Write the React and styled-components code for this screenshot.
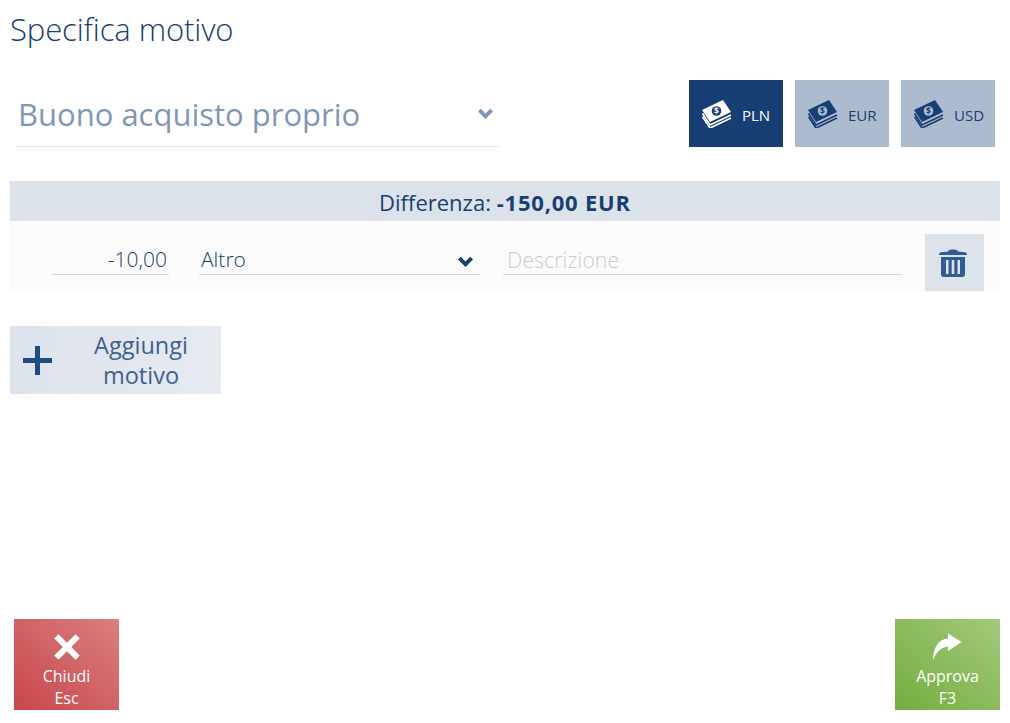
import styled, { createGlobalStyle } from "styled-components"

const Global = createGlobalStyle`
    html, body{
        margin: 0;
        padding: 0;
        background: #fff;
    }
    *{
        box-sizing: border-box;
    }
    body{
        font-family: "Open Sans", "Noto Sans", "Liberation Sans", sans-serif;
        color: #173f73;
    }
`

function MoneyIcon(){
    return (
        <svg width="30" height="29" viewBox="0 0 30 29">
            <polygon className="bill" points="0,11 21,1 29,13 8,23" />
            <polyline className="edge" points="0.500,14.500 8,26 29,16" />
            <polyline className="edge" points="0.500,17.800 8,29 29,19" />
            <circle className="coin" cx="14.500" cy="12" r="4.800" />
            <text className="sign" x="14.500" y="15" textAnchor="middle" fontSize="8.500" fontWeight="700">$</text>
        </svg>
    )
}

function TrashIcon(){
    return (
        <svg width="28" height="28" viewBox="0 0 28 28" fill="#2f5d93">
            <path d="M10 1c1.500-.8 6.500-.8 8 0l1 1.600 7 .7c1.200.2 2 1 2 2.700H0c0-1.700.8-2.500 2-2.700l7-.7z" />
            <path fillRule="evenodd" d="M2 8h24v17.500C26 27 25 28 23.500 28h-19C3 28 2 27 2 25.500zM7 11v14h2.500V11zm5.700 0v14h2.600V11zm5.800 0v14H21V11z" />
        </svg>
    )
}

function Chevron(){
    return (
        <ChevronSvg viewBox="0 0 15 13" fill="currentColor">
            <polygon points="0,4.500 2.800,1.700 7.500,6.400 12.200,1.700 15,4.500 7.500,12" />
        </ChevronSvg>
    )
}

function ShareIcon(){
    return (
        <svg width="29" height="28" viewBox="0 0 29 28" fill="#fff">
            <path d="M28.500 9 15 .5v5C6 6 0 14 0 27.500 3 18.500 9 14 15 13.500V18z" />
        </svg>
    )
}

function CurrencyOption({ code, active }){
    return (
        <CurrencyButton $active={active}>
            <MoneyIcon />
            <span>{code}</span>
        </CurrencyButton>
    )
}

export default function App(){
    return (
        <Page>
            <Global />
            <Title>Specifica motivo</Title>
            <TopRow>
                <TypeSelect>
                    <span>Buono acquisto proprio</span>
                    <Chevron />
                </TypeSelect>
                <Currencies>
                    <CurrencyOption code="PLN" active />
                    <CurrencyOption code="EUR" />
                    <CurrencyOption code="USD" />
                </Currencies>
            </TopRow>
            <DiffBar>Differenza: <strong>-150,00 EUR</strong></DiffBar>
            <ReasonRow>
                <Amount>-10,00</Amount>
                <ReasonSelect>
                    <span>Altro</span>
                    <Chevron />
                </ReasonSelect>
                <Description>Descrizione</Description>
                <DeleteButton><TrashIcon /></DeleteButton>
            </ReasonRow>
            <AddButton>
                <PlusMark />
                <span>Aggiungi motivo</span>
            </AddButton>
            <Footer>
                <ActionButton $from="#c8464a" $to="#d97f80">
                    <ActionIcon><CloseMark /></ActionIcon>
                    <ActionLabel>Chiudi</ActionLabel>
                    <ActionLabel>Esc</ActionLabel>
                </ActionButton>
                <ActionButton $from="#74ad40" $to="#a3c97a">
                    <ActionIcon><ShareIcon /></ActionIcon>
                    <ActionLabel>Approva</ActionLabel>
                    <ActionLabel>F3</ActionLabel>
                </ActionButton>
            </Footer>
        </Page>
    )
}

const Page = styled.div`
    width: 100%;
    height: 723px;
    padding: 0 10px 13px;
    display: flex;
    flex-direction: column;
    overflow: hidden;
`

const Title = styled.h1`
    margin: 9px 0 0;
    height: 41px;
    font-size: 31px;
    line-height: 41px;
    font-weight: 300;
    color: #173f73;
    letter-spacing: -0.1px;
`

const TopRow = styled.div`
    margin-top: 30px;
    display: flex;
    justify-content: space-between;
    padding: 0 5px 0 6px;
`

const ChevronSvg = styled.svg`
    flex: none;
    width: 15px;
    height: 13px;
`

const TypeSelect = styled.div`
    width: 483px;
    height: 67px;
    padding: 0 6px 0 2px;
    border-bottom: 1px solid #e3e5e8;
    display: flex;
    align-items: center;
    justify-content: space-between;
    color: #7f97b5;
    font-size: 31px;
    span{
        padding-top: 2px;
    }
`

const Currencies = styled.div`
    display: flex;
    gap: 12px;
`

const CurrencyButton = styled.div`
    width: 94px;
    height: 67px;
    display: flex;
    align-items: center;
    gap: 10px;
    padding-left: 13px;
    background: ${props => props.$active ? "#173f73" : "#adbbce"};
    color: ${props => props.$active ? "#fff" : "#173f73"};
    font-size: 15px;
    span{
        padding-top: 2px;
    }
    .bill{
        fill: currentColor;
    }
    .edge{
        fill: none;
        stroke: currentColor;
        stroke-width: 1.700;
    }
    .coin{
        fill: ${props => props.$active ? "#173f73" : "#adbbce"};
    }
    .sign{
        fill: ${props => props.$active ? "#fff" : "#173f73"};
    }
`

const DiffBar = styled.div`
    margin-top: 34px;
    height: 40px;
    background: #dce2ea;
    font-size: 22px;
    line-height: 42px;
    text-align: center;
    color: #173f73;
    strong{
        font-weight: 700;
        letter-spacing: 0.8px;
    }
`

const ReasonRow = styled.div`
    height: 71px;
    background: #fbfbfb;
    display: flex;
    align-items: flex-start;
    padding: 13px 16px 0 42px;
`

const fieldLine = `
    height: 41px;
    border-bottom: 1px solid #d5d7da;
    font-size: 21px;
    line-height: 51px;
`

const Amount = styled.div`
    ${fieldLine}
    width: 117px;
    padding-right: 2px;
    text-align: right;
    font-weight: 300;
    color: #173f73;
`

const ReasonSelect = styled.div`
    ${fieldLine}
    width: 281px;
    margin-left: 30px;
    padding: 0 7px 0 2px;
    display: flex;
    justify-content: space-between;
    font-weight: 300;
    color: #173f73;
    ${ChevronSvg}{
        margin-top: 21px;
    }
`

const Description = styled.div`
    ${fieldLine}
    width: 399px;
    margin-left: 23px;
    padding-left: 4px;
    font-size: 21.500px;
    font-weight: 300;
    color: #c9ccd0;
`

const DeleteButton = styled.div`
    width: 59px;
    height: 57px;
    margin-left: 23px;
    padding-right: 3px;
    background: #dde3ea;
    display: flex;
    align-items: center;
    justify-content: center;
`

const AddButton = styled.div`
    margin-top: 34px;
    width: 211px;
    height: 68px;
    display: flex;
    align-items: center;
    background: linear-gradient(100deg, #dde3ec, #e6eaf1);
    color: #3f6190;
    line-height: 30px;
    span{
        width: 140px;
        margin-left: 19px;
        text-align: center;
        font-size: 23.500px;
    }
`

const PlusMark = styled.i`
    flex: none;
    width: 29px;
    height: 29px;
    margin-left: 13px;
    background:
        linear-gradient(#1f4b80, #1f4b80) center / 29px 5px no-repeat,
        linear-gradient(#1f4b80, #1f4b80) center / 5px 29px no-repeat;
`

const Footer = styled.div`
    margin-top: auto;
    padding-left: 4px;
    display: flex;
    justify-content: space-between;
`

const ActionButton = styled.div`
    width: 105px;
    height: 91px;
    display: flex;
    flex-direction: column;
    align-items: center;
    background: linear-gradient(to top right, ${props => props.$from}, ${props => props.$to});
    color: #fff;
`

const ActionIcon = styled.div`
    flex: none;
    height: 46px;
    padding-top: 14px;
    svg{
        display: block;
    }
`

const CloseMark = styled.i`
    display: block;
    width: 30px;
    height: 30px;
    margin-top: -1px;
    background:
        linear-gradient(#fff, #fff) center / 39px 6px no-repeat,
        linear-gradient(#fff, #fff) center / 6px 39px no-repeat;
    transform: rotate(45deg);
`

const ActionLabel = styled.div`
    font-size: 16px;
    line-height: 22px;
`
